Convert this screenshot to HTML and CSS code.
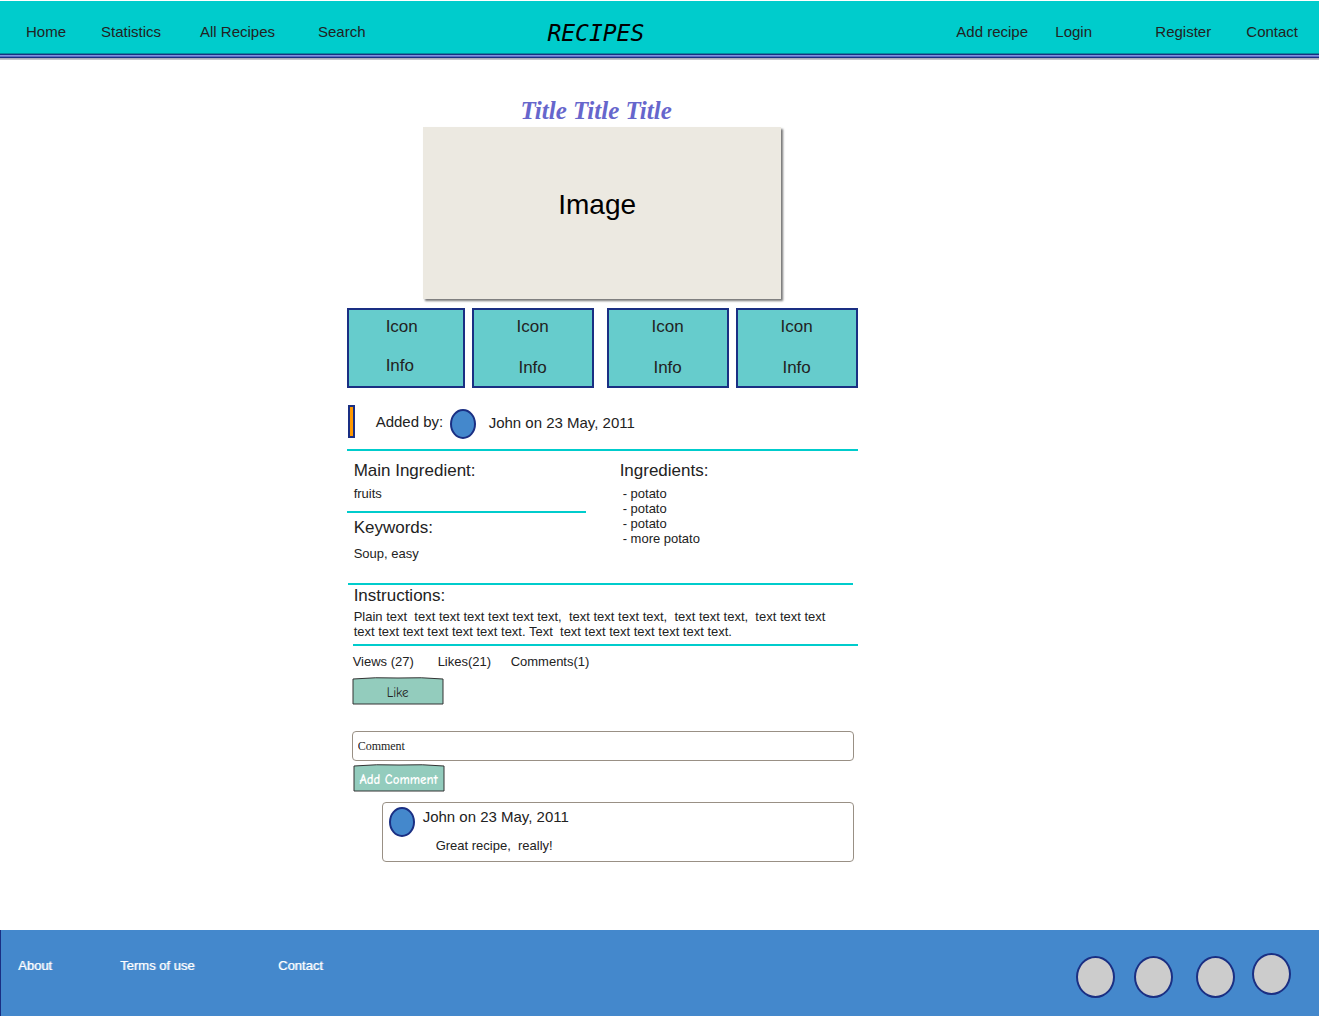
FILE: index.html
```html
<!DOCTYPE html>
<html lang="en">
<head>
<meta charset="utf-8">
<title>Recipes</title>
<link rel="stylesheet" href="styles.css">
</head>
<body>
<header class="site-header">
  <div class="header-bar">
    <nav class="nav nav-main" aria-label="Main">
      <a href="#">Home</a>
      <a href="#">Statistics</a>
      <a href="#">All Recipes</a>
      <a href="#">Search</a>
    </nav>
    <a class="brand" href="#">RECIPES</a>
    <nav class="nav nav-user" aria-label="Account">
      <a href="#">Add recipe</a>
      <a href="#">Login</a>
      <a href="#">Register</a>
      <a href="#">Contact</a>
    </nav>
  </div>
</header>

<main class="page">
  <article class="recipe">
    <h1 class="title">Title Title Title</h1>
    <div class="photo">Image</div>

    <div class="cards">
      <div class="card-pair card-pair-first">
        <div class="card card-left"><span>Icon</span><span>Info</span></div>
        <div class="card"><span>Icon</span><span>Info</span></div>
      </div>
      <div class="card-pair">
        <div class="card"><span>Icon</span><span>Info</span></div>
        <div class="card"><span>Icon</span><span>Info</span></div>
      </div>
    </div>

    <div class="author">
      <span class="marker"></span>
      <span class="author-label">Added by:</span>
      <span class="avatar"></span>
      <span class="author-name">John on 23 May, 2011</span>
    </div>

    <div class="details">
      <div>
        <section class="block block-main">
          <h2>Main Ingredient:</h2>
          <p>fruits</p>
        </section>
        <section class="block block-keywords">
          <h2>Keywords:</h2>
          <p>Soup, easy</p>
        </section>
      </div>
      <section class="block block-list">
        <h2>Ingredients:</h2>
        <ul>
          <li>- potato</li>
          <li>- potato</li>
          <li>- potato</li>
          <li>- more potato</li>
        </ul>
      </section>
    </div>

    <section class="instructions">
      <h2>Instructions:</h2>
      <p>Plain text&nbsp; text text text text text text,&nbsp; text text text text,&nbsp; text text text,&nbsp; text text text text text text text text text text. Text&nbsp; text text text text text text text.</p>
    </section>

    <div class="feedback">
      <div class="stats"><span>Views (27)</span><span>Likes(21)</span><span>Comments(1)</span></div>
      <button class="sketch-button" type="button">
        <svg viewBox="0 0 92 28" aria-hidden="true"><path d="M1 2 Q24 0 46 1 Q70 0 91 2 L91 27 L1 27 Z"/></svg>
        <span>Like</span>
      </button>
      <form class="comment-form">
        <input type="text" value="Comment" aria-label="Comment">
        <button class="sketch-button sketch-button-light" type="button">
          <svg viewBox="0 0 92 28" aria-hidden="true"><path d="M1 2 Q24 0 46 1 Q70 0 91 2 L91 27 L1 27 Z"/></svg>
          <span>Add Comment</span>
        </button>
      </form>
      <div class="comment">
        <span class="avatar"></span>
        <div>
          <div class="author-name">John on 23 May, 2011</div>
          <p>Great recipe,&nbsp; really!</p>
        </div>
      </div>
    </div>
  </article>
</main>

<footer class="site-footer">
  <nav class="footer-links" aria-label="Footer">
    <a href="#">About</a>
    <a href="#">Terms of use</a>
    <a href="#">Contact</a>
  </nav>
  <div class="social">
    <span class="dot"></span>
    <span class="dot"></span>
    <span class="dot"></span>
    <span class="dot dot-raised"></span>
  </div>
</footer>
</body>
</html>
```
FILE: styles.css
```css
* {
  box-sizing: border-box;
}

body {
  margin: 0;
  min-height: 100vh;
  display: flex;
  flex-direction: column;
  background: #fff;
  color: #222;
  font: 13px/15px "Liberation Sans", Arial, sans-serif;
}

h1, h2, p, ul {
  margin: 0;
  padding: 0;
  font-weight: normal;
}

a {
  color: inherit;
  text-decoration: none;
}

/* Header */
.site-header {
  border-top: 1px solid #fff;
}

.site-header::after {
  content: "";
  display: block;
  height: 7px;
  background: linear-gradient(#058b9d 1px, #1a2f83 1px 2px, #7f93dc 2px 3px, #5b6cc4 3px 4px, #1a2f83 4px 5px, #a9abb8 5px 6px, #c4c4cb 6px);
}

.header-bar {
  display: grid;
  grid-template-columns: 41.5% 1fr auto;
  align-items: center;
  height: 52px;
  padding-top: 10px;
  background: #00cccc;
}

.nav {
  display: grid;
  font-size: 15px;
  line-height: 18px;
}

.nav-main {
  grid-template-columns: 75px 99px 118px auto;
  padding-left: 26px;
}

.nav-user {
  grid-template-columns: 99px 100px 91px auto;
  padding-right: 21px;
}

.brand {
  padding-top: 2px;
  color: #000;
  font: italic 23px/28px "DejaVu Sans Mono", monospace;
}

/* Recipe */
.page {
  flex: 1;
  display: grid;
  grid-template-columns: 429fr minmax(0, 511px) 571fr;
  padding: 35px 0 68px;
}

.recipe {
  grid-column: 2;
}

.title {
  padding-right: 12px;
  color: #6666cc;
  font: italic bold 25px/32px "Liberation Serif", serif;
  text-align: center;
}

.photo {
  display: flex;
  align-items: center;
  justify-content: center;
  width: 70%;
  height: 172px;
  margin: 0 auto 9px;
  padding: 0 10px 17px 0;
  background: #ece9e1;
  box-shadow: 2px 2px 2px #777;
  color: #000;
  font-size: 28px;
  line-height: 32px;
}

.cards {
  display: grid;
  grid-template-columns: 247fr 251fr;
  gap: 13px;
}

.card-pair {
  display: grid;
  grid-template-columns: 1fr 1fr;
  gap: 7px;
}

.card-pair-first {
  grid-template-columns: 118fr 122fr;
}

.card {
  display: flex;
  flex-direction: column;
  align-items: center;
  justify-content: space-between;
  height: 80px;
  padding: 7px 0 8px;
  border: 2px solid #1a2f83;
  background: #66cccc;
  font-size: 17px;
  line-height: 20px;
}

.card-left {
  align-items: flex-start;
  padding: 7px 0 10px 37px;
}

.author {
  display: flex;
  align-items: center;
  margin-top: 17px;
  padding: 0 0 11px 1px;
  border-bottom: 2px solid #00cccc;
}

.marker {
  width: 7px;
  height: 33px;
  border: 2px solid #1a2f83;
  background: #ff9900;
}

.author-label,
.author-name {
  font-size: 15px;
  line-height: 18px;
}

.author-label {
  width: 74px;
  margin-left: 21px;
}

.author .author-name {
  margin-left: 13px;
  padding-top: 2px;
}

.avatar {
  flex: none;
  width: 26px;
  height: 30px;
  border: 2px solid #1a2f83;
  border-radius: 50%;
  background: #4488cc;
}

.author .avatar {
  align-self: flex-end;
  margin-bottom: -1px;
}

h2 {
  font-size: 17px;
  line-height: 20px;
}

.details {
  display: grid;
  grid-template-columns: 239fr 238fr;
  gap: 34px;
  min-height: 132px;
}

.block {
  padding: 10px 7px 0;
}

.block p {
  padding-top: 5px;
}

.block-main {
  padding-bottom: 10px;
  border-bottom: 2px solid #00cccc;
}

.block-keywords {
  padding-top: 5px;
}

.block-keywords p {
  padding-top: 8px;
}

.block-list {
  padding: 10px 0 0;
}

.block-list ul {
  padding: 5px 0 0 3px;
  list-style: none;
}

.instructions {
  margin-left: 6px;
}

.instructions::before {
  content: "";
  display: block;
  margin: 0 5px 0 -5px;
  border-top: 2px solid #00cccc;
}

.instructions h2 {
  padding: 1px 0 0 1px;
}

.instructions p {
  padding: 3px 10px 5px 1px;
  border-bottom: 2px solid #00cccc;
}

.feedback {
  padding: 8px 4px 0 5px;
}

.stats {
  display: grid;
  grid-template-columns: 85px 73px auto;
  padding-left: 1px;
}

.sketch-button {
  position: relative;
  display: block;
  width: 92px;
  height: 28px;
  margin-top: 8px;
  padding: 2px 0 0;
  border: 0;
  background: none;
  color: #222;
  font: 13px/15px "Comic Sans MS", "Comic Neue", cursive;
  white-space: nowrap;
}

.sketch-button svg {
  position: absolute;
  inset: 0;
  fill: #93ccbd;
  stroke: #333;
}

.sketch-button span {
  position: relative;
}

.comment-form {
  margin-top: 26px;
}

.comment-form input {
  display: block;
  width: 100%;
  height: 30px;
  padding: 0 5px;
  border: 1px solid #999085;
  border-radius: 4px;
  background: #fff;
  color: #222;
  font: 12px/15px "Liberation Serif", serif;
}

.sketch-button-light {
  margin: 3px 0 0 1px;
  color: #fff;
  font-weight: bold;
}

.comment {
  display: flex;
  gap: 8px;
  height: 60px;
  margin: 10px 0 0 30px;
  padding: 4px 6px;
  border: 1px solid #999085;
  border-radius: 4px;
}

.comment .author-name {
  padding-top: 1px;
}

.comment p {
  padding: 12px 0 0 13px;
}

/* Footer */
.site-footer {
  display: flex;
  justify-content: space-between;
  height: 86px;
  padding: 23px 28px 0 17px;
  border-left: 1px solid #1a2f83;
  background: #4488cc;
  color: #fff;
}

.footer-links {
  display: grid;
  grid-template-columns: 102px 158px auto;
  padding-top: 5px;
  text-shadow: 1px 0 rgba(255, 255, 255, 0.5);
}

.social {
  display: grid;
  grid-template-columns: 58px 62px 56px auto;
}

.dot {
  width: 39px;
  height: 42px;
  margin-top: 3px;
  border: 2px solid #1a2f83;
  border-radius: 50%;
  background: #cccccc;
}

.dot-raised {
  margin-top: 0;
}
```
